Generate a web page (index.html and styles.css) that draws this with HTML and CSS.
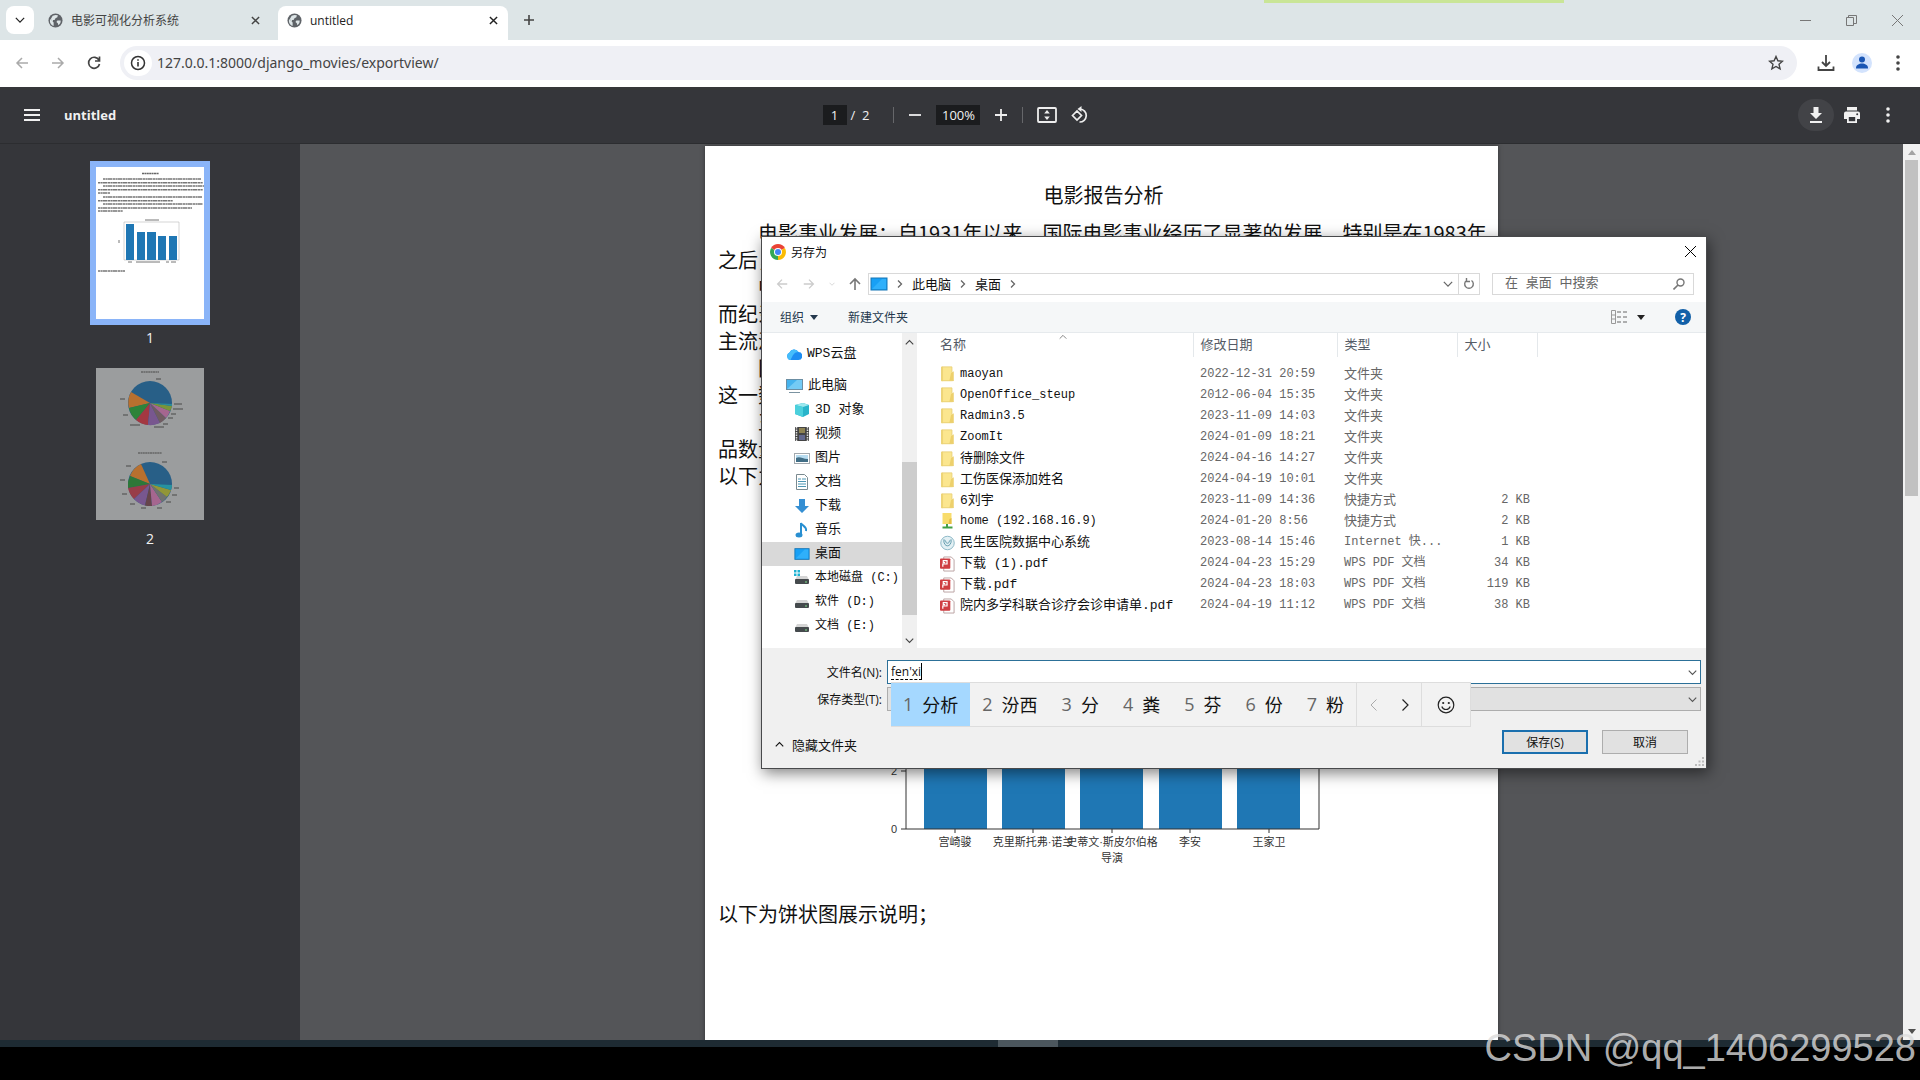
FILE: index.html
```html
<!DOCTYPE html>
<html lang="zh-CN">
<head>
    <meta charset="UTF-8">
    <title>untitled</title>
    <link rel="stylesheet" href="styles.css">
</head>
<body>

<svg class="defs">
    <symbol id="globe" viewBox="0 0 16 16">
        <circle cx="8" cy="8" r="7.5" fill="#5f6368"/>
        <path d="M2.5 6.5L6 10v3.8C3.500 13 2 11 2 8.300zM5 3l3-1 2.500.5-.5 2-2 1-1 2H5.500L5 9 3 6.500zM10 8h3.500c.3 2-.8 4-2.500 5l-.5-2L9 9.500z" fill="#dde5e7"/>
    </symbol>
    <symbol id="cross" viewBox="0 0 10 10"><path d="M1 1l8 8M9 1l-8 8" fill="none" stroke="currentColor" stroke-width="1.600"/></symbol>
    <symbol id="down" viewBox="0 0 12 12"><path d="M1 3.500l5 5 5-5" fill="none" stroke="currentColor" stroke-width="1.500"/></symbol>
    <symbol id="up" viewBox="0 0 12 12"><path d="M1 8.500l5-5 5 5" fill="none" stroke="currentColor" stroke-width="1.500"/></symbol>
    <symbol id="left" viewBox="0 0 16 16"><path d="M14 8H3M8 3L3 8l5 5" fill="none" stroke="currentColor" stroke-width="1.500"/></symbol>
    <symbol id="right" viewBox="0 0 16 16"><path d="M2 8h11M8 3l5 5-5 5" fill="none" stroke="currentColor" stroke-width="1.500"/></symbol>
    <symbol id="chev" viewBox="0 0 6 10"><path d="M1 1.500L4.500 5 1 8.500" fill="none" stroke="#666" stroke-width="1.300"/></symbol>
    <symbol id="dots" viewBox="0 0 4 18"><g fill="currentColor"><circle cx="2" cy="3" r="1.800"/><circle cx="2" cy="9" r="1.800"/><circle cx="2" cy="15" r="1.800"/></g></symbol>
    <symbol id="folder" viewBox="0 0 14 18">
        <path d="M0 1h12v16H0z" fill="#fbe68f"/>
        <path d="M0 1h2v16H0z" fill="#f0d676"/>
        <path d="M11 8l3-2v11H9z" fill="#edd06c"/>
        <path d="M.5 1h11.500v6M.5 1v15.500h13" fill="none" stroke="#ead178"/>
    </symbol>
    <symbol id="pdf" viewBox="0 0 16 16">
        <path d="M4 .5h8l3 3v12H4z" fill="#fff" stroke="#b9a0a0"/>
        <rect y="2" width="11" height="11" rx="1" fill="#cf3e42"/>
        <path d="M3 11V8h4.500V4.500H3.500v2H5.500" fill="none" stroke="#fff" stroke-width="1.300"/>
    </symbol>
    <symbol id="screen" viewBox="0 0 18 14">
        <rect x="1" y="1" width="16" height="12" fill="#18a0f5" stroke="#1676b5"/>
        <path d="M2 12l10-10h4v10z" fill="#2fb0fb"/>
    </symbol>
    <symbol id="disk" viewBox="0 0 16 16">
        <path d="M3 6h10l2 4H1z" fill="#d5d5d5"/>
        <rect x="1" y="9" width="14" height="5" rx="1" fill="#454a4d"/>
        <path d="M11 12h2" stroke="#7fe08a"/>
    </symbol>
</svg>

<!-- 浏览器标签栏 -->
<div class="tabs">
    <button class="tab-search" aria-label="搜索标签页"><svg width="10" height="10"><use href="#down"/></svg></button>
    <div class="tab">
        <svg width="15" height="15"><use href="#globe"/></svg>
        <span>电影可视化分析系统</span>
        <button aria-label="关闭"><svg width="9" height="9"><use href="#cross"/></svg></button>
    </div>
    <div class="tab active">
        <svg width="15" height="15"><use href="#globe"/></svg>
        <span>untitled</span>
        <button aria-label="关闭"><svg width="9" height="9"><use href="#cross"/></svg></button>
    </div>
    <button class="tab-new" aria-label="新标签页"><svg width="12" height="12" viewBox="0 0 12 12"><path d="M6 1v10M1 6h10" stroke="#444" stroke-width="1.600"/></svg></button>
    <div class="share-line"></div>
    <div class="win-btns">
        <button aria-label="最小化"><svg width="11" height="11" viewBox="0 0 11 11"><path d="M0 5.500h11" stroke="#777"/></svg></button>
        <button aria-label="还原"><svg width="11" height="11" viewBox="0 0 11 11"><path d="M.5 2.500h7v8h-7zM2.500 2.500v-2h8v8h-3" fill="none" stroke="#777"/></svg></button>
        <button aria-label="关闭窗口"><svg width="11" height="11" viewBox="0 0 11 11"><path d="M0 0l11 11M11 0L0 11" stroke="#777"/></svg></button>
    </div>
</div>

<div class="nav">
    <button class="off" aria-label="后退"><svg width="16" height="16"><use href="#left"/></svg></button>
    <button class="off" aria-label="前进"><svg width="16" height="16"><use href="#right"/></svg></button>
    <button aria-label="重新加载"><svg width="16" height="16" viewBox="0 0 16 16"><path d="M13 5.200A5.500 5.500 0 1 0 13.500 9M13.500 1.500v4.500H9" fill="none" stroke="#444" stroke-width="1.700"/></svg></button>
    <div class="omnibox">
        <span class="info"><svg width="16" height="16" viewBox="0 0 16 16"><circle cx="8" cy="8" r="6.500" fill="none" stroke="#333" stroke-width="1.500"/><path d="M8 7v4.500M8 4.200v1.600" stroke="#333" stroke-width="1.600"/></svg></span>
        <input type="text" class="url" aria-label="地址" value="127.0.0.1:8000/django_movies/exportview/">
        <svg width="16" height="16" viewBox="0 0 16 16"><path d="M8 1.500l1.900 4.300 4.600.4-3.500 3.100 1.100 4.600L8 11.500l-4.100 2.400L5 9.300 1.500 6.200l4.600-.4z" fill="none" stroke="#444" stroke-width="1.400"/></svg>
    </div>
    <div class="nav-right">
        <button aria-label="下载内容"><svg width="18" height="18" viewBox="0 0 18 18"><path d="M9 1v11M5 8l4 4 4-4M1.500 12.500v3.500h15v-3.500" fill="none" stroke="#444" stroke-width="1.800"/></svg></button>
        <button aria-label="个人资料"><svg width="20" height="20" viewBox="0 0 20 20"><circle cx="10" cy="10" r="10" fill="#d3e3fd"/><circle cx="10" cy="6.500" r="3" fill="#1a56b4"/><path d="M4 15c0-6 12-6 12 0v.5H4z" fill="#1a56b4"/></svg></button>
        <button aria-label="更多"><svg width="4" height="18"><use href="#dots"/></svg></button>
    </div>
</div>

<!-- PDF 工具栏 -->
<div class="pdf-bar">
    <div class="pdf-title">
        <button aria-label="菜单"><svg width="16" height="14" viewBox="0 0 16 14"><path d="M0 2h16M0 7h16M0 12h16" stroke="#f1f1f1" stroke-width="2"/></svg></button>
        <strong>untitled</strong>
    </div>
    <div class="pdf-tools">
        <input type="text" class="box page-no" aria-label="页码" value="1">
        <span class="total">/&nbsp; 2</span>
        <i class="line"></i>
        <button aria-label="缩小"><svg width="14" height="14" viewBox="0 0 14 14"><path d="M1 7h12" stroke="#eee" stroke-width="1.800"/></svg></button>
        <input type="text" class="box zoom" aria-label="缩放" value="100%">
        <button aria-label="放大"><svg width="14" height="14" viewBox="0 0 14 14"><path d="M1 7h12M7 1v12" stroke="#eee" stroke-width="1.800"/></svg></button>
        <i class="line"></i>
        <button aria-label="适合页面大小"><svg width="20" height="16" viewBox="0 0 20 16"><rect x="1" y="1" width="18" height="14" rx="1" fill="none" stroke="#eee" stroke-width="1.800"/><path d="M10 3l2.800 3.500H7.200zM10 13l2.800-3.500H7.200z" fill="#eee"/></svg></button>
        <button aria-label="旋转"><svg width="18" height="18" viewBox="0 0 18 18"><path d="M1.500 9.500L6 5l4.500 4.500L6 14zM9 3a6.500 6.500 0 1 1-.5 13" fill="none" stroke="#eee" stroke-width="1.700"/><path d="M10.500 0v6L6.500 3z" fill="#eee"/></svg></button>
    </div>
    <div class="pdf-right">
        <button class="hover" aria-label="下载"><svg width="14" height="18" viewBox="0 0 14 18"><path d="M4.500 1h5v6H13l-6 6-6-6h3.500zM1 15h12v2H1z" fill="#f1f1f1"/></svg></button>
        <button aria-label="打印"><svg width="18" height="18" viewBox="0 0 18 18"><path d="M4 1h10v3.500H4zM3 5.500h12a2 2 0 0 1 2 2V13h-3v4H4v-4H1V7.500a2 2 0 0 1 2-2z" fill="#f1f1f1"/><path d="M5.800 11h6.400v4.200H5.800z" fill="#35363a"/><circle cx="14.200" cy="8.200" r="1" fill="#35363a"/></svg></button>
        <button aria-label="更多操作"><svg width="4" height="18"><use href="#dots"/></svg></button>
    </div>
</div>

<div class="viewer">
    <div class="side">
        <a href="#page1" class="thumb on">
            <svg width="108" height="152" viewBox="0 0 108 152">
                <path d="M46 6.500h17" stroke="#666" stroke-width="1.500" stroke-dasharray="2 .4"/>
                <g stroke="#777" stroke-width="1.500" stroke-dasharray="2.300 .4 1.500 .3 5 .5">
                    <path d="M7 12h98M2 15.700h105M7 19h101M2 22.700h105M2 26h12M7 30h99M2 33.700h75M7 37h100M2 41h94M2 44h25M2 104h27"/>
                </g>
                <path d="M49 53h14M23 73v3M40 95h24M32 95h4M70 95h3M75 95h5" stroke="#777" stroke-width="1"/>
                <path d="M28 55v38h55V55z" fill="none" stroke="#aaa" stroke-width=".5"/>
                <path d="M30 57h8v36h-8zM41 65h8v28h-8zM51 65h9v28h-9zM62 69h8v24h-8zM73 69h8v24h-8z" fill="#1f77b4"/>
            </svg>
        </a>
        <span class="num">1</span>
        <a href="#page2" class="thumb">
            <svg width="108" height="152" viewBox="0 0 108 152">
                <path d="M45 4h18M42 85h24" stroke="#666" stroke-width="1.500" stroke-dasharray="2 .4"/>
                <g transform="translate(54 35)">
                    <circle r="22" fill="#285f87"/>
                    <path d="M0 0L-19-11A22 22 0 0 0-21 5z" fill="#b8702f"/>
                    <path d="M0 0L-21 5A22 22 0 0 0-14 17z" fill="#2d8339"/>
                    <path d="M0 0L-14 17A22 22 0 0 0-2 22z" fill="#a33841"/>
                    <path d="M0 0L-2 22A22 22 0 0 0 10 20z" fill="#78578f"/>
                    <path d="M0 0L10 20A22 22 0 0 0 16 15z" fill="#715c61"/>
                    <path d="M0 0L16 15A22 22 0 0 0 20 8z" fill="#a5668f"/>
                    <path d="M0 0L20 8A22 22 0 0 0 22 3z" fill="#799439"/>
                    <path d="M0 0L22 3A22 22 0 0 0 22 1z" fill="#2c8d99"/>
                </g>
                <path d="M60 11h5M24 31h5M27 47h5M34 57h10M58 59h10M67 56h5M72 50h5M75 46h5M77 41h10M78 36h8" stroke="#666" stroke-width="1.500"/>
                <g transform="translate(54 116)">
                    <circle r="22" fill="#285f87"/>
                    <path d="M0 0L-9-20A22 22 0 0 0-20-8z" fill="#b8702f"/>
                    <path d="M0 0L-20-8A22 22 0 0 0-22 4z" fill="#2d7838"/>
                    <path d="M0 0L-22 4A22 22 0 0 0-16 15z" fill="#983d49"/>
                    <path d="M0 0L-16 15A22 22 0 0 0-5 21.500z" fill="#78578f"/>
                    <path d="M0 0L-5 21.500A22 22 0 0 0 2 22z" fill="#66454b"/>
                    <path d="M0 0L2 22A22 22 0 0 0 12 18z" fill="#a5668f"/>
                    <path d="M0 0L12 18A22 22 0 0 0 17 13z" fill="#707270"/>
                    <path d="M0 0L17 13A22 22 0 0 0 21 6z" fill="#929637"/>
                    <path d="M0 0L21 6A22 22 0 0 0 22 1z" fill="#27939f"/>
                </g>
                <path d="M66 94h5M30 98h5M24 112h5M26 126h5M34 136h5M45 140h5M61 140h5M70 134h5M76 127h5M78 120h5" stroke="#666" stroke-width="1.500"/>
            </svg>
        </a>
        <span class="num">2</span>
    </div>

    <div class="main">
        <div class="paper" id="page1">
            <h1>电影报告分析</h1>
            <p class="indent">电影事业发展：自1931年以来，国际电影事业经历了显著的发展，特别是在1983年</p>
            <p>之后，</p>
            <p class="indent">中</p>
            <p>而纪录</p>
            <p>主流派</p>
            <p class="indent">国</p>
            <p>这一数</p>
            <p class="indent">王</p>
            <p>品数量</p>
            <p>以下为</p>
            <svg class="chart" width="460" height="330" viewBox="0 0 460 330">
                <g fill="#1f77b4">
                    <rect x="54" y="19" width="63" height="263"/>
                    <rect x="132" y="77" width="63" height="205"/>
                    <rect x="210" y="77" width="63" height="205"/>
                    <rect x="289" y="106" width="63" height="176"/>
                    <rect x="367" y="106" width="63" height="176"/>
                </g>
                <path d="M36 6v276h413V6zM31 224h5M31 282h5M85 282v4M163 282v4M242 282v4M320 282v4M399 282v4" fill="none" stroke="#333"/>
                <g class="tick">
                    <text x="24" y="228">2</text>
                    <text x="24" y="286">0</text>
                    <text x="85" y="299">宫崎骏</text>
                    <text x="163" y="299">克里斯托弗·诺兰</text>
                    <text x="242" y="299">史蒂文·斯皮尔伯格</text>
                    <text x="320" y="299">李安</text>
                    <text x="399" y="299">王家卫</text>
                    <text x="242" y="315">导演</text>
                </g>
            </svg>
            <p>以下为饼状图展示说明；</p>
        </div>
    </div>

    <div class="scroll">
        <svg width="8" height="5" viewBox="0 0 8 5"><path d="M0 5l4-5 4 5z" fill="#a3a3a3"/></svg>
        <i></i>
        <svg width="8" height="5" viewBox="0 0 8 5"><path d="M0 0l4 5 4-5z" fill="#505050"/></svg>
    </div>
</div>
<div class="taskbar"><i></i></div>
<div class="letterbox"></div>

<!-- 另存为 -->
<div class="dialog" role="dialog" aria-label="另存为">
    <div class="dlg-title">
        <svg width="16" height="16" viewBox="0 0 16 16">
            <path d="M8 8L1.100 4A8 8 0 0 1 14.900 4z" fill="#ea4335"/>
            <path d="M8 8l6.900-4A8 8 0 0 1 8 16z" fill="#fbbc04"/>
            <path d="M8 8v8A8 8 0 0 1 1.100 4z" fill="#34a853"/>
            <circle cx="8" cy="8" r="4" fill="#fff"/><circle cx="8" cy="8" r="3" fill="#4285f4"/>
        </svg>
        <span>另存为</span>
        <button aria-label="关闭对话框"><svg width="11" height="11" viewBox="0 0 11 11"><path d="M0 0l11 11M11 0L0 11" stroke="#000"/></svg></button>
    </div>

    <div class="address">
        <div class="arrows">
            <button class="pale" aria-label="返回"><svg width="14" height="14"><use href="#left"/></svg></button>
            <button class="pale" aria-label="前进到"><svg width="14" height="14"><use href="#right"/></svg></button>
            <button class="pale" aria-label="最近位置"><svg width="6" height="6"><use href="#down"/></svg></button>
            <button aria-label="上移"><svg width="14" height="14" viewBox="0 0 14 14"><path d="M7 13V2M2 7l5-5 5 5" fill="none" stroke="#777" stroke-width="1.600"/></svg></button>
        </div>
        <div class="path">
            <svg width="18" height="14"><use href="#screen"/></svg>
            <svg width="6" height="10"><use href="#chev"/></svg>
            <a href="#">此电脑</a>
            <svg width="6" height="10"><use href="#chev"/></svg>
            <a href="#">桌面</a>
            <svg width="6" height="10"><use href="#chev"/></svg>
            <button class="drop" aria-label="展开"><svg width="10" height="10"><use href="#down"/></svg></button>
            <button class="refresh" aria-label="刷新"><svg width="12" height="12" viewBox="0 0 12 12"><path d="M8.500 2.500a4.300 4.300 0 1 1-5 0M3.500 0v3.500H7" fill="none" stroke="#777" stroke-width="1.400"/></svg></button>
        </div>
        <div class="search">
            <input type="text" aria-label="搜索" placeholder="在 桌面 中搜索">
            <svg width="12" height="12" viewBox="0 0 12 12"><circle cx="7.500" cy="4.500" r="3.500" fill="none" stroke="#777" stroke-width="1.400"/><path d="M5 7L.5 11.500" stroke="#777" stroke-width="1.600"/></svg>
        </div>
    </div>

    <div class="cmds">
        <button>组织 <svg width="8" height="5" viewBox="0 0 8 5"><path d="M0 0h8L4 5z" fill="#24384d"/></svg></button>
        <button>新建文件夹</button>
        <button class="view" aria-label="更改视图">
            <svg width="16" height="14" viewBox="0 0 16 14"><path d="M.5.5h4v13h-4zM.5 5h4M.5 9h4" fill="none" stroke="#999"/><path d="M6 2h4M12 2h4M6 7h4M12 7h4M6 12h4M12 12h4" stroke="#666"/></svg>
            <svg width="8" height="5" viewBox="0 0 8 5"><path d="M0 0h8L4 5z" fill="#222"/></svg>
        </button>
        <button class="help" aria-label="帮助">?</button>
    </div>

    <div class="dlg-body">
        <div class="tree">
            <a href="#" class="root"><svg width="16" height="16" viewBox="0 0 16 16"><path d="M4 14a4 4 0 0 1-.5-7.500 5 5 0 0 1 9-.5 4 4 0 0 1-.5 8z" fill="#1d8df2"/><path d="M3.500 6.500a5 5 0 0 1 9-.5C8 6 7 9 4.500 14H4a4 4 0 0 1-.5-7.500z" fill="#45bdfb"/></svg>WPS云盘</a>
            <a href="#" class="root pc"><svg width="17" height="16" viewBox="0 0 17 16"><rect x=".5" y="1.500" width="16" height="10" fill="#45b3ee" stroke="#6b8ea3"/><path d="M1 11L11 2h5v9z" fill="#74cbf5"/><path d="M3 14.500h11" stroke="#7b93a1"/></svg>此电脑</a>
            <a href="#"><svg width="16" height="16" viewBox="0 0 16 16"><path d="M1 3l8-2 6 2v9l-6 3-8-3z" fill="#28b4ca"/><path d="M1 3l8-2 6 2-6 2z" fill="#9ce8ee"/><path d="M1 3l8 2v10l-8-3z" fill="#4bd0dc"/></svg>3D 对象</a>
            <a href="#"><svg width="16" height="16" viewBox="0 0 16 16"><rect x="1" y="1" width="14" height="14" fill="#444"/><path d="M2.500 1v14M13.500 1v14" stroke="#ddd" stroke-width="1.500" stroke-dasharray="1.500 1"/><path d="M5 2h6v5H5z" fill="#8e8353"/><path d="M5 9h6v5H5z" fill="#62688e"/></svg>视频</a>
            <a href="#"><svg width="16" height="16" viewBox="0 0 16 16"><rect x=".5" y="3.500" width="15" height="10" fill="#fff" stroke="#a2a9ae"/><rect x="2" y="5" width="12" height="7" fill="#b7dcf0"/><path d="M2 8c4-2 6 1 12 1v3H2z" fill="#416e86"/></svg>图片</a>
            <a href="#"><svg width="16" height="16" viewBox="0 0 16 16"><path d="M2.500.5h8l3 3v12h-11z" fill="#fff" stroke="#7a8a90"/><path d="M4 5h3M4 7.500h8M4 10h8M4 12.500h8M8 5h4" stroke="#4d96b3"/></svg>文档</a>
            <a href="#"><svg width="16" height="16" viewBox="0 0 16 16"><path d="M5 1h6v7h4l-7 7-7-7h4z" fill="#358fd3"/></svg>下载</a>
            <a href="#"><svg width="16" height="16" viewBox="0 0 16 16"><path d="M7 12V1c1 3 6 3 5 8" fill="none" stroke="#288fd1" stroke-width="2"/><ellipse cx="5" cy="13" rx="3.500" ry="2.500" fill="#288fd1"/></svg>音乐</a>
            <a href="#" class="on"><svg width="16" height="16"><use href="#screen"/></svg>桌面</a>
            <a href="#" class="drive"><svg width="16" height="16" viewBox="0 0 16 16"><use href="#disk"/><path d="M0 0h2.500v2.500H0zM3.500 0H6v2.500H3.500zM0 3.500h2.500V6H0zM3.500 3.500H6V6H3.500z" fill="#1cb1d1"/></svg>本地磁盘 (C:)</a>
            <a href="#" class="drive"><svg width="16" height="16"><use href="#disk"/></svg>软件 (D:)</a>
            <a href="#" class="drive"><svg width="16" height="16"><use href="#disk"/></svg>文档 (E:)</a>
        </div>
        <div class="tree-scroll">
            <svg width="9" height="9"><use href="#up"/></svg>
            <i></i>
            <svg width="9" height="9"><use href="#down"/></svg>
        </div>
        <div class="files">
            <svg class="sort" width="8" height="8"><use href="#up"/></svg>
            <table>
                <thead>
                    <tr><th class="c-name">名称</th><th class="c-date">修改日期</th><th class="c-type">类型</th><th class="c-size">大小</th><td></td></tr>
                </thead>
                <tbody>
                    <tr><td class="name en"><svg><use href="#folder"/></svg>maoyan</td><td class="en">2022-12-31 20:59</td><td>文件夹</td><td></td></tr>
                    <tr><td class="name en"><svg><use href="#folder"/></svg>OpenOffice_steup</td><td class="en">2012-06-04 15:35</td><td>文件夹</td><td></td></tr>
                    <tr><td class="name en"><svg><use href="#folder"/></svg>Radmin3.5</td><td class="en">2023-11-09 14:03</td><td>文件夹</td><td></td></tr>
                    <tr><td class="name en"><svg><use href="#folder"/></svg>ZoomIt</td><td class="en">2024-01-09 18:21</td><td>文件夹</td><td></td></tr>
                    <tr><td class="name"><svg><use href="#folder"/></svg>待删除文件</td><td class="en">2024-04-16 14:27</td><td>文件夹</td><td></td></tr>
                    <tr><td class="name"><svg><use href="#folder"/></svg>工伤医保添加姓名</td><td class="en">2024-04-19 10:01</td><td>文件夹</td><td></td></tr>
                    <tr><td class="name"><svg><use href="#folder"/></svg>6刘宇</td><td class="en">2023-11-09 14:36</td><td>快捷方式</td><td class="size en">2 KB</td></tr>
                    <tr><td class="name en"><svg viewBox="0 0 14 16"><path d="M2 0h9v11H2z" fill="#f8dc6c"/><path d="M9 6l2-1v6H8z" fill="#e4bd45"/><path d="M6.500 11v3M2 14.500h10" stroke="#43a047" stroke-width="2"/></svg>home (192.168.16.9)</td><td class="en">2024-01-20 8:56</td><td>快捷方式</td><td class="size en">2 KB</td></tr>
                    <tr><td class="name"><svg viewBox="0 0 16 16"><circle cx="8" cy="8" r="7.200" fill="#e3f0f4" stroke="#87b5c4"/><path d="M4 5c0 8 8 8 8 0M6 6c0 3 4 3 4 0M4 4l2 2M12 4l-2 2" fill="none" stroke="#5c97aa"/></svg>民生医院数据中心系统</td><td class="en">2023-08-14 15:46</td><td class="en">Internet 快...</td><td class="size en">1 KB</td></tr>
                    <tr><td class="name"><svg><use href="#pdf"/></svg>下载 (1).pdf</td><td class="en">2024-04-23 15:29</td><td class="en">WPS PDF 文档</td><td class="size en">34 KB</td></tr>
                    <tr><td class="name"><svg><use href="#pdf"/></svg>下载.pdf</td><td class="en">2024-04-23 18:03</td><td class="en">WPS PDF 文档</td><td class="size en">119 KB</td></tr>
                    <tr><td class="name"><svg><use href="#pdf"/></svg>院内多学科联合诊疗会诊申请单.pdf</td><td class="en">2024-04-19 11:12</td><td class="en">WPS PDF 文档</td><td class="size en">38 KB</td></tr>
                </tbody>
            </table>
        </div>
    </div>

    <form class="dlg-foot">
        <div class="field">
            <label for="fname">文件名(N):</label>
            <div class="combo">
                <input type="text" id="fname" value="fen'xi">
                <i class="typed"></i>
                <svg width="9" height="9"><use href="#down"/></svg>
            </div>
        </div>
        <div class="field">
            <label for="ftype">保存类型(T):</label>
            <div class="combo">
                <select id="ftype"><option></option></select>
                <svg width="9" height="9"><use href="#down"/></svg>
            </div>
        </div>
        <div class="actions">
            <button type="button" class="fold"><svg width="9" height="9"><use href="#up"/></svg>隐藏文件夹</button>
            <button type="button" class="btn save">保存(S)</button>
            <button type="button" class="btn">取消</button>
        </div>
        <svg class="grip" width="9" height="9" viewBox="0 0 9 9"><path d="M7 0h2v2H7zM7 3.500h2v2H7zM3.500 3.500h2v2h-2zM7 7h2v2H7zM3.500 7h2v2h-2zM0 7h2v2H0z" fill="#bbb"/></svg>
    </form>

    <!-- 输入法候选 -->
    <div class="ime">
        <button class="cand on"><span>1</span>分析</button>
        <button class="cand"><span>2</span>汾西</button>
        <button class="cand"><span>3</span>分</button>
        <button class="cand"><span>4</span>粪</button>
        <button class="cand"><span>5</span>芬</button>
        <button class="cand"><span>6</span>份</button>
        <button class="cand"><span>7</span>粉</button>
        <div class="pager">
            <button aria-label="上一页"><svg width="7" height="12" viewBox="0 0 7 12"><path d="M6.500.5L1 6l5.500 5.500" fill="none" stroke="#aaa"/></svg></button>
            <button aria-label="下一页"><svg width="7" height="12" viewBox="0 0 7 12"><path d="M.5.5L6 6 .5 11.500" fill="none" stroke="#222" stroke-width="1.200"/></svg></button>
        </div>
        <button class="smile" aria-label="表情"><svg width="18" height="18" viewBox="0 0 18 18"><circle cx="9" cy="9" r="7.800" fill="none" stroke="#222" stroke-width="1.200"/><circle cx="6.200" cy="7" r="1.100" fill="#222"/><circle cx="11.800" cy="7" r="1.100" fill="#222"/><path d="M4.800 10.500c1.500 4 6.900 4 8.400 0" fill="none" stroke="#222" stroke-width="1.200"/></svg></button>
    </div>
</div>

<div class="mark">CSDN @qq_1406299528</div>

</body>
</html>
```
FILE: styles.css
```css
*{
    box-sizing: border-box;
    padding: 0;
    margin: 0;
}
body {
    display: flex;
    flex-direction: column;
    height: 100vh;
    overflow: hidden;
    position: relative;
    background: #000;
    font-family: "Open Sans", "Noto Sans CJK SC", sans-serif;
    font-size: 12px;
    color: #222;
}
button{
    display: flex;
    align-items: center;
    justify-content: center;
    border: 0;
    background: none;
    font: inherit;
    color: inherit;
}
input, select{
    border: 0;
    outline: 0;
    font: inherit;
    color: inherit;
}
a{
    color: inherit;
    text-decoration: none;
}
svg{
    flex: none;
}
.defs{
    display: none;
}

/* 标签栏 */
.tabs{
    display: flex;
    flex: none;
    align-items: center;
    height: 40px;
    padding-left: 6px;
    background: #dde5e7;
    position: relative;
}
.tab-search{
    width: 28px;
    height: 28px;
    border-radius: 8px;
    background: #fff;
}
.tab{
    display: flex;
    align-items: center;
    gap: 8px;
    width: 230px;
    height: 34px;
    margin-top: 6px;
    padding: 0 2px 6px 14px;
    color: #444;
}
.tab button{
    width: 14px;
    margin-left: auto;
}
.tab.active{
    margin-left: 14px;
    padding: 0 8px 6px 9px;
    background: #fff;
    border-radius: 8px 8px 0 0;
    color: #222;
}
.tab-new{
    width: 42px;
    height: 28px;
}
.share-line{
    position: absolute;
    top: 0;
    left: 1264px;
    width: 300px;
    height: 3px;
    background: #c9e597;
}
.win-btns{
    display: flex;
    margin-left: auto;
}
.win-btns button{
    width: 46px;
    height: 40px;
}

/* 地址栏 */
.nav{
    display: flex;
    flex: none;
    align-items: center;
    height: 47px;
    padding: 0 0 2px 4px;
    background: #fff;
}
.nav > button{
    width: 36px;
}
.off{
    color: #aaa;
}
.omnibox{
    display: flex;
    flex: 1;
    align-items: center;
    height: 34px;
    margin-left: 8px;
    padding: 0 13px 0 4px;
    border-radius: 17px;
    background: #eff0f5;
}
.info{
    display: flex;
    align-items: center;
    justify-content: center;
    width: 28px;
    height: 26px;
    border-radius: 13px;
    background: #fff;
}
.url{
    flex: 1;
    margin-left: 5px;
    background: none;
    font-family: "Noto Sans", sans-serif;
    font-size: 14px;
    color: #444;
}
.nav-right{
    display: flex;
    padding: 0 4px 0 11px;
    color: #444;
}
.nav-right button{
    width: 36px;
}

/* PDF 工具栏 */
.pdf-bar{
    display: grid;
    grid-template-columns: 1fr auto 1fr;
    flex: none;
    align-items: center;
    height: 57px;
    background: #35363a;
    border-bottom: 1px solid #2c2d30;
    color: #f1f1f1;
    font-size: 13px;
    z-index: 1;
}
.pdf-title{
    display: flex;
    gap: 24px;
    padding-left: 24px;
}
.pdf-tools{
    display: flex;
    align-items: center;
    gap: 14px;
    margin-right: 8px;
}
.box{
    height: 20px;
    background: #1b1c1e;
    text-align: center;
}
.page-no{
    width: 24px;
}
.total{
    margin: 0 10px 0 -10px;
}
.zoom{
    width: 44px;
}
.line{
    width: 1px;
    height: 16px;
    background: #66676a;
}
.pdf-right{
    display: flex;
    justify-content: flex-end;
    padding-right: 14px;
}
.pdf-right button{
    width: 36px;
    height: 32px;
}
.hover{
    border-radius: 16px;
    background: #424347;
}

.viewer{
    display: flex;
    flex: 1;
    min-height: 0;
}
.side{
    display: flex;
    flex: none;
    flex-direction: column;
    align-items: center;
    width: 300px;
    padding-top: 17px;
    background: #35363a;
}
.thumb{
    display: flex;
    background: #9b9d9e;
}
.thumb.on{
    border: 6px solid #8ab4f8;
    background: #fff;
}
.num{
    padding: 4px 0 21px;
    color: #f1f1f1;
    font-size: 14px;
    line-height: 18px;
}
.thumb:not(.on) + .num{
    padding-top: 10px;
}
.main{
    display: flex;
    flex: 1;
    justify-content: center;
    padding-top: 2px;
    background: #545558;
    overflow: hidden;
}
.paper{
    width: 793px;
    height: 1122px;
    padding: 31px 13px;
    background: #fff;
    font-family: "Noto Sans CJK SC", sans-serif;
    font-size: 20px;
    line-height: 27px;
    color: #111;
    box-shadow: 0 0 4px #333;
}
.paper h1{
    margin: 4px 0 11px 4px;
    font-size: 20px;
    font-weight: normal;
    text-align: center;
}
.indent{
    padding-left: 40px;
    white-space: nowrap;
}
.chart{
    display: block;
    margin: 58px 0 23px 152px;
}
.tick{
    fill: #333;
    font-family: "Liberation Sans", "Noto Sans CJK SC", sans-serif;
    font-size: 11px;
    text-anchor: middle;
}
.scroll{
    display: flex;
    flex: none;
    flex-direction: column;
    align-items: center;
    width: 17px;
    padding: 6px 0;
    background: #f1f1f1;
}
.scroll i{
    width: 13px;
    height: 38%;
    margin: 5px 0 auto;
    background: #c1c1c1;
}
.taskbar{
    flex: none;
    height: 7px;
    background: #1e2b33;
}
.taskbar i{
    display: block;
    width: 60px;
    height: 7px;
    margin-left: 52%;
    background: #4c575e;
}
.letterbox{
    flex: none;
    height: 33px;
}

/* 对话框 */
.dialog{
    position: absolute;
    left: 761px;
    top: 236px;
    z-index: 2;
    width: 946px;
    border: 1px solid #48494b;
    background: #fff;
    box-shadow: 2px 4px 14px rgba(0, 0, 0, .5);
    color: #111;
}
.dlg-title{
    display: flex;
    align-items: center;
    gap: 5px;
    height: 29px;
    padding: 0 10px 0 8px;
}
.dlg-title button{
    margin-left: auto;
}
.address{
    display: flex;
    height: 36px;
    padding: 7px 12px 7px 0;
    font-size: 13px;
    line-height: 16px;
}
.arrows{
    display: flex;
    align-items: center;
    justify-content: space-between;
    width: 106px;
    padding: 0 6px 0 13px;
}
.pale{
    color: #ccc;
}
.path{
    display: flex;
    flex: 1;
    align-items: center;
    gap: 9px;
    padding-left: 1px;
    border: 1px solid #d9d9d9;
}
.drop{
    margin-left: auto;
    color: #666;
}
.refresh{
    width: 21px;
    height: 20px;
    margin-left: -4px;
    border-left: 1px solid #d9d9d9;
}
.search{
    display: flex;
    align-items: center;
    width: 202px;
    margin-left: 12px;
    padding: 0 8px 0 12px;
    border: 1px solid #d9d9d9;
}
.search input{
    flex: 1;
    min-width: 0;
    font-family: "Liberation Mono", "Noto Sans CJK SC", monospace;
}
.search input::placeholder{
    color: #666;
}
.cmds{
    display: flex;
    align-items: center;
    gap: 30px;
    height: 31px;
    padding: 0 15px 0 18px;
    border-bottom: 1px solid #e6eaed;
    background: #f5f7f8;
    color: #24384d;
}
.cmds button{
    gap: 6px;
}
.cmds .view{
    gap: 10px;
    margin-left: auto;
}
.cmds .help{
    width: 16px;
    height: 16px;
    border-radius: 8px;
    background: #1260a8;
    color: #fff;
    font-weight: bold;
}
.dlg-body{
    display: flex;
    height: 315px;
}
.tree{
    width: 140px;
    padding-top: 9px;
    font-size: 13px;
    line-height: 20px;
    font-family: "Liberation Mono", "Noto Sans CJK SC", monospace;
}
.tree a{
    display: flex;
    align-items: center;
    gap: 5px;
    height: 24px;
    padding-left: 32px;
    white-space: nowrap;
}
.tree .root{
    padding-left: 24px;
}
.tree .pc{
    margin-top: 8px;
}
.tree .on{
    background: #d9d9d9;
}
.tree .drive{
    font-size: 12px;
}
.tree-scroll{
    display: flex;
    flex-direction: column;
    align-items: center;
    width: 15px;
    padding: 5px 0 3px;
    background: #f0f0f0;
    color: #444;
}
.tree-scroll i{
    width: 15px;
    height: 153px;
    margin: auto 0 21px;
    background: #cdcdcd;
}
.files{
    position: relative;
    flex: 1;
}
.sort{
    position: absolute;
    left: 142px;
    top: 0;
    color: #888;
}
table{
    width: 100%;
    table-layout: fixed;
    border-collapse: collapse;
    font-family: "Liberation Mono", "Noto Sans CJK SC", monospace;
    font-size: 13px;
    line-height: 21px;
    color: #666;
}
th{
    height: 24px;
    padding-left: 7px;
    border-right: 1px solid #e4e8eb;
    font-weight: normal;
    text-align: left;
    color: #555b66;
}
.c-name{
    width: 276px;
    padding-left: 23px;
}
.c-date{
    width: 144px;
}
.c-type{
    width: 120px;
}
.c-size{
    width: 80px;
}
td{
    height: 21px;
    padding-left: 7px;
    white-space: nowrap;
}
tbody tr:first-child td{
    padding-top: 7px;
}
.name{
    padding-left: 23px;
    color: #111;
}
.name svg{
    width: 15px;
    height: 16px;
    margin-right: 5px;
    vertical-align: middle;
}
.en{
    font-size: 12px;
}
.size{
    padding-right: 7px;
    text-align: right;
}
.dlg-foot{
    position: relative;
    height: 120px;
    padding: 12px 5px 0 0;
    background: #f0f0f0;
}
.field{
    display: flex;
    align-items: center;
    height: 24px;
    margin-bottom: 3px;
}
.field label{
    width: 125px;
    padding-right: 5px;
    text-align: right;
}
.combo{
    display: flex;
    flex: 1;
    position: relative;
    height: 24px;
}
.combo input{
    width: 100%;
    padding: 0 20px 2px 3px;
    border: 1px solid #2c7098;
    background: #fff;
}
.combo select{
    width: 100%;
    border: 1px solid #adadad;
    background: #e1e1e1;
    appearance: none;
}
.combo svg{
    position: absolute;
    right: 4px;
    top: 8px;
    color: #555;
}
/* 拼音下划线和光标 */
.typed{
    position: absolute;
    left: 4px;
    top: 3px;
    width: 31px;
    height: 17px;
    border-right: 1px solid #000;
    border-bottom: 1px dashed #000;
}
.actions{
    display: flex;
    align-items: center;
    gap: 14px;
    margin-top: 19px;
    padding-right: 13px;
}
.fold{
    gap: 8px;
    margin: 4px auto 0 13px;
    font-size: 13px;
}
.btn{
    width: 86px;
    height: 24px;
    border: 1px solid #adadad;
    background: #e1e1e1;
}
.save{
    border: 2px solid #1a6fae;
}
.grip{
    position: absolute;
    right: 2px;
    bottom: 2px;
}
.ime{
    position: absolute;
    left: 129px;
    top: 445px;
    display: flex;
    height: 45px;
    border: 1px solid #ddd;
    border-left: 0;
    background: #f2f2f2;
    font-size: 18px;
}
.cand{
    gap: 9px;
    padding: 0 12px 2px;
}
.cand span{
    color: #666;
}
.ime .on{
    background: #a5d8ff;
}
.pager{
    display: flex;
    justify-content: space-around;
    width: 66px;
    border: 1px solid #ddd;
    border-width: 0 1px;
}
.smile{
    width: 48px;
}
.mark{
    position: absolute;
    right: 4px;
    bottom: 10px;
    z-index: 3;
    font-family: "Liberation Sans", sans-serif;
    font-size: 38px;
    line-height: 44px;
    color: rgba(220, 220, 220, .8);
}
```
